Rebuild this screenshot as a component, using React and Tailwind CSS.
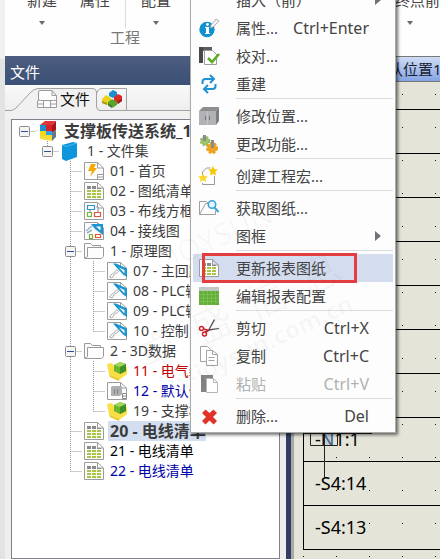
import clsx from "clsx";

const TREE = [
  { icon: "root", label: "支撑板传送系统_1", guides: ["box"], bold: true },
  { icon: "book", label: "1 - 文件集", guides: ["", "boxTop"] },
  { icon: "bolt", label: "01 - 首页", guides: ["", "", "tee"] },
  { icon: "list", label: "02 - 图纸清单", guides: ["", "", "tee"] },
  { icon: "blocks", label: "03 - 布线方框图", guides: ["", "", "tee"] },
  { icon: "wiring", label: "04 - 接线图", guides: ["", "", "tee"] },
  { icon: "folder", label: "1 - 原理图", guides: ["", "", "boxTee"] },
  { icon: "scheme", label: "07 - 主回路", guides: ["", "", "line", "tee"] },
  { icon: "scheme", label: "08 - PLC输入", guides: ["", "", "line", "tee"] },
  { icon: "scheme", label: "09 - PLC输出", guides: ["", "", "line", "tee"] },
  { icon: "scheme", label: "10 - 控制", guides: ["", "", "line", "end"] },
  { icon: "folder", label: "2 - 3D数据", guides: ["", "", "boxTee"] },
  { icon: "part", label: "11 - 电气装配", guides: ["", "", "line", "tee"], color: "text-[#c00000]" },
  { icon: "cabinetPage", label: "12 - 默认位置", guides: ["", "", "line", "tee"], color: "text-[#0000a8]" },
  { icon: "part", label: "19 - 支撑板", guides: ["", "", "line", "end"] },
  { icon: "list", label: "20 - 电线清单", guides: ["", "", "tee"], bold: true, selected: true },
  { icon: "list", label: "21 - 电线清单", guides: ["", "", "tee"], color: "text-black" },
  { icon: "list", label: "22 - 电线清单", guides: ["", "", "end"], color: "text-[#0000a8]" },
];

const MENU = [
  [
    { label: "插入（前）", arrow: true },
    { icon: "info", label: "属性...", keys: "Ctrl+Enter" },
    { icon: "check", label: "校对..." },
    { icon: "refresh", label: "重建" },
  ],
  [
    { icon: "cabinet", label: "修改位置..." },
    { icon: "gears", label: "更改功能..." },
  ],
  [{ icon: "macro", label: "创建工程宏..." }],
  [
    { icon: "search", label: "获取图纸..." },
    { label: "图框", arrow: true },
  ],
  [
    { icon: "list", label: "更新报表图纸", active: true },
    { icon: "grid", label: "编辑报表配置" },
  ],
  [
    { icon: "cut", label: "剪切", keys: "Ctrl+X" },
    { icon: "copy", label: "复制", keys: "Ctrl+C" },
    { icon: "paste", label: "粘贴", keys: "Ctrl+V", disabled: true },
  ],
  [{ icon: "del", label: "删除...", keys: "Del" }],
];

const WIRES = ["", "", "", "", "", "", "", "", "-N1:1", "-S4:14", "-S4:13"];

const page = <path d="M.500 1.500h13l6 5.500v11.500h-19zM13.500 1.500v5.500h6" fill="#fdfdfd" stroke="#9c9c9c" />;

const ICONS = {
  root: (
    <>
      <path d="M2 4l5-4h11l-4 4z" fill="#e0343a" />
      <path d="M14 4l4-4v9l-4 3z" fill="#a8161c" />
      <path d="M2 4h6v6H2z" fill="#1c8fd0" />
      <path d="M8 4h6v6H8z" fill="#d8232a" />
      <path d="M2 10h6v5H2z" fill="#f4d51f" />
      <path d="M8 10h6v4H8z" fill="#2f9fe0" />
      <path d="M2 15h6v4l-6-1zM8 14h6v6l-6-1z" fill="#f6dc3a" />
      <path d="M14 12l4-3v7l-4 4z" fill="#5f7c86" />
    </>
  ),
  book: (
    <>
      <path d="M1 4l11-3 4 1v14l-11 4-4-2z" fill="#0d96dc" />
      <path d="M1 4l4 1.500L16 2" fill="none" stroke="#59bdf0" strokeWidth=".8" />
    </>
  ),
  bolt: (
    <>
      {page}
      <path d="M7 3h5l-2 4h3l-7 9 2-6H4z" fill="#f2a900" />
      <path d="M13.500 13.500h6v5h-6zM13.500 16h6" fill="#fff" stroke="#999" />
    </>
  ),
  list: (
    <>
      {page}
      <path d="M3 5h4v3H3zM8 5h4v3H8zM13 7h4v1h-4z" fill="#8a8a8a" />
      <path d="M3 9h4v2H3zM8 9h4v2H8zM13 9h4v2h-4zM3 12h4v2H3zM8 12h4v2H8zM13 12h4v2h-4zM3 15h4v2H3zM8 15h4v2H8zM13 15h4v2h-4z" fill="#a9c545" />
    </>
  ),
  blocks: (
    <>
      {page}
      <g fill="#fff" strokeWidth="1.200">
        <path d="M6 8v4M12 6h2v5" stroke="#999" />
        <path d="M3.500 4.500h7v4h-7z" stroke="#2a91cf" />
        <path d="M3.500 11.500h4v4h-4z" stroke="#79b530" />
        <path d="M10.500 11.500h6v4h-6z" stroke="#e0553a" />
      </g>
    </>
  ),
  wiring: (
    <>
      {page}
      <path d="M7 3h12v11l-4-3-4-3z" fill="#1c93d2" />
      <path d="M12 5.500h4.500v4z" fill="#fff" />
      <path d="M2 10l6-5M3 12l5-3" stroke="#8fb3c6" strokeWidth="1.500" />
      <g fill="#fff" strokeWidth="1.200">
        <path d="M5.500 13.500h3v4h-3z" stroke="#79b530" />
        <path d="M11.500 13.500h5v3h-5z" stroke="#e0553a" />
      </g>
    </>
  ),
  scheme: (
    <>
      {page}
      <path d="M6 2.500h3l11 5V16l-4-2.500z" fill="#1b93cf" />
      <path d="M12 6.500l5.500 2.500v3.500z" fill="#f1f9fd" />
      <path d="M2.500 16l3-3.500 2 1-2.500 3.500zM7 11.500l3-3 1.500 2-2.500 2z" fill="#fff" stroke="#a3a3a3" strokeWidth=".9" />
    </>
  ),
  folder: (
    <>
      <path d="M.500 17V2.500h6l2 2h8v2" fill="#fafafa" stroke="#9a9a9a" />
      <path d="M.500 17.500l3-2v-9h16v9l-2 2z" fill="#fdfdfd" stroke="#9a9a9a" />
    </>
  ),
  part: (
    <>
      <path d="M0 3l5-1 4 6 11-2v7l-8 6L2 14z" fill="#f9de45" />
      <path d="M2 14l10 4v2L3 16z" fill="#e8c42c" />
      <path d="M7 4l6-3 6 2v7l-6 3-6-3z" fill="#69b52e" />
      <path d="M7 4l6-3 6 2-6 3z" fill="#a4d65e" />
      <path d="M13 6l6-3v7l-6 3z" fill="#3f8f25" />
    </>
  ),
  cabinetPage: (
    <>
      {page}
      <path d="M4 6l2-1h9v8l-2 2H4z" fill="#adb0b3" />
      <path d="M7.500 8v5M10.500 8v5" stroke="#858585" />
      <path d="M15.500 12.500h4v5h-4zM15.500 15h4" fill="#fff" stroke="#888" />
    </>
  ),
  info: (
    <>
      <circle cx="8" cy="11.500" r="7.700" fill="#1091d2" />
      <path d="M6 9h4v6h1v1H6v-1h1v-5H6z" fill="#fff" />
      <circle cx="8.500" cy="6.500" r="1.400" fill="#fff" />
      <path d="M12 7l5-6 3 2-6 6-3 1z" fill="#f5f5f5" stroke="#9a9a9a" strokeWidth=".8" />
    </>
  ),
  check: (
    <>
      <path d="M0 1h4v16H0z" fill="#484848" />
      <path d="M4 1h9v4H4z" fill="#5d5d5d" />
      <path d="M5.500 4.500h8l4 4v10h-12z" fill="#fff" stroke="#9c9c9c" />
      <path d="M9 12l4 4 7-8" fill="none" stroke="#5eac24" strokeWidth="2.600" />
    </>
  ),
  refresh: (
    <g fill="none" stroke="#1c93d2" strokeWidth="2">
      <path d="M3.500 10V8q0-3 3-3h8M11 1l4 4-4 4" />
      <path d="M16.500 10v2q0 3-3 3h-8M9 11l-4 4 4 4" />
    </g>
  ),
  cabinet: (
    <>
      <path d="M0 5l4-4h16l-3 4z" fill="#8b8d90" />
      <path d="M0 5h17v14H0z" fill="#b0b2b5" />
      <path d="M17 5l3-4v14l-3 4z" fill="#7b7d81" />
      <path d="M6.500 10v4M10.500 10v4" stroke="#777" />
      <path d="M8.500 5v14" stroke="#c3c5c7" />
    </>
  ),
  gears: (
    <>
      <circle cx="6" cy="7" r="4.300" fill="#9cc46a" stroke="#8fbe60" strokeWidth="2" strokeDasharray="2 1.500" />
      <circle cx="13" cy="14" r="4.800" fill="#f1a51e" stroke="#eb9d1c" strokeWidth="2.400" strokeDasharray="2.500 1.500" />
      <path d="M4 1h3v6H4zM12 6h3v8h-3z" fill="#8b8b8b" />
    </>
  ),
  macro: (
    <>
      <path d="M3.500 11V6l4-4h4M15.500 10v8.500h-12V17" fill="none" stroke="#9a9a9a" />
      <path d="M14 0l1.500 3.200 3.500.3-2.700 2.300L17 9.500l-3-1.800-3 1.800.7-3.700L9 3.500l3.500-.3z" fill="#f7c600" />
      <path d="M4 7l1.300 3L9 10.500l-2.500 2.200L7 16l-3-1.700L1 16l.5-3.300L-1 10.500 2.700 10z" fill="#fbd72a" />
    </>
  ),
  search: (
    <>
      <path d="M.500 16V3.500h7l2 2h5M.500 16.500l6-11h3M.500 16.500h16v-4" fill="none" stroke="#a0a0a0" />
      <circle cx="13" cy="6.500" r="3.700" fill="#e9f6fd" stroke="#3da0d8" strokeWidth="1.600" />
      <path d="M15.500 9.500l4 4.500" stroke="#3da0d8" strokeWidth="2" />
    </>
  ),
  grid: (
    <>
      <path d="M0 1h20v4H0z" fill="#c4c8c4" />
      <path d="M0 5h20v14H0z" fill="#62b038" />
      <path d="M4.500 5v14M8.500 5v14M12.500 5v14M16.500 5v14M0 8.500h20M0 12h20M0 15.500h20" stroke="#82c35d" strokeWidth=".7" />
    </>
  ),
  cut: (
    <>
      <path d="M5 13l4-1L15 1l1 1-5 9 9-1v1l-9 1.500-4 2z" fill="#555" />
      <circle cx="2.500" cy="10.500" r="2" fill="none" stroke="#d0222a" strokeWidth="1.500" />
      <circle cx="5.500" cy="16" r="2" fill="none" stroke="#d0222a" strokeWidth="1.500" />
      <path d="M4.500 11l5 1-3 2.500" fill="none" stroke="#d0222a" strokeWidth="1.300" />
    </>
  ),
  copy: (
    <g fill="#fff" stroke="#a3a3a3">
      <path d="M1.500.500h7l3 3v12h-10z" />
      <path d="M7.500 4.500h6l5 4v11h-11zM13.500 4.500v4h5M9.500 11.500h6M9.500 14.500h6" />
    </g>
  ),
  paste: (
    <>
      <path d="M2 1h12v4H7v13H2z" fill="#858585" />
      <path d="M7.500 4.500h7l4 4v10h-11z" fill="#fff" stroke="#b5b5b5" />
      <path d="M14.500 4.500v4h4" fill="none" stroke="#b5b5b5" />
    </>
  ),
  del: (
    <path d="M3 7l3.500-3.500L10.500 7l4-3.500L18 7l-4 4 4 4-3.500 3.500-4-4-4 4L3 15l4-4z" fill="#df3427" />
  ),
};

function Icon({ name }) {
  return (
    <svg viewBox="0 0 20 20" className="h-5 w-5 shrink-0 overflow-visible" aria-hidden="true">
      {ICONS[name]}
    </svg>
  );
}

// One 23px wide cell of the dotted tree lines, with an optional collapse box.
function Guide({ kind }) {
  const box = kind.startsWith("box");
  const lines = {
    line: "M11.500 0V20",
    tee: "M11.500 0V20M11.500 10.500H23",
    end: "M11.500 0V10.500M11.500 10.500H23",
    box: "M11.500 10.500H23",
    boxTop: "M11.500 0V10.500M11.500 10.500H23",
    boxTee: "M11.500 0V20M11.500 10.500H23",
  };
  return (
    <svg viewBox="0 0 23 20" className="h-5 w-[23px] shrink-0" aria-hidden="true">
      <path d={lines[kind] || ""} stroke="#999" strokeDasharray="1 1" fill="none" />
      {box && (
        <>
          <rect x="6.500" y="5.500" width="10" height="10" rx="1" fill="#f4f4f4" stroke="#8d8d8d" />
          <path d="M8 10.500h7" stroke="#2f4f9a" />
        </>
      )}
    </svg>
  );
}

function Caret() {
  return (
    <svg viewBox="0 0 6 4" className="h-1 w-1.5" aria-hidden="true">
      <path d="M0 0h6L3 4z" fill="#6b6b6b" />
    </svg>
  );
}

function RibbonButton({ label, caret }) {
  return (
    <button type="button" className="flex h-9 flex-col items-center gap-[11px] whitespace-nowrap leading-5">
      {label}
      {caret && <Caret />}
    </button>
  );
}

function Ribbon() {
  return (
    <header className="flex h-14 shrink-0 justify-between overflow-hidden bg-[#fefefe] text-[15px] text-[#444]">
      <div className="-mt-[10px] w-60">
        <div className="flex pl-[22px]">
          <RibbonButton label="新建" caret />
          <div className="w-[23px]" />
          <RibbonButton label="属性" />
          <div className="mx-[15px] h-[38px] w-px bg-[#dcdcdc]" />
          <RibbonButton label="配置" caret />
        </div>
        <div className="text-center leading-[18px] text-[#777]">工程</div>
      </div>
      <div className="-mt-[10px]">
        <RibbonButton label="线终点前" caret />
      </div>
    </header>
  );
}

function FilePanel() {
  return (
    <section className="flex w-[281px] shrink-0 flex-col bg-[#eeeeef]">
      <h2 className="h-[29px] bg-linear-to-b from-[#4c5d80] to-[#3b5075] pl-[5px] text-[15px] leading-8 text-white">
        文件
      </h2>
      <div className="relative flex h-[34px] shrink-0 bg-linear-to-b from-[#f9f9f9] to-[#eaeaea] pt-[3px] text-[15px] text-[#111]">
        <svg className="absolute inset-0 h-full w-full" aria-hidden="true">
          <path d="M0 25.500H6Q9 25 11 23L25 8Q29 3.500 33 3.500H88Q91 3.500 91.500 7V22Q92 25.500 95 25.500H281V34H0z" fill="#f1f1f1" />
          <path d="M0 25.500H6Q9 25 11 23L25 8Q29 3.500 33 3.500H88Q91 3.500 91.500 7V22Q92 25.500 95 25.500H281M92 8Q93 3.500 97 3.500H121.500V25" fill="none" stroke="#a2a2a2" />
        </svg>
        <button type="button" className="relative flex h-[22px] items-center gap-[3px] pl-8">
          <svg viewBox="0 0 20 20" className="h-5 w-5" aria-hidden="true">
            <path d="M1.500 12V3q0-1.500 1.500-1.500h12l4.500 5V12M15 1.500v5h4.500M.500 12q1.500-1.500 3-.5h13q1.500-1 3 .5v6.500h-19zM6.500 11.500v7M13.500 11.500v7M.500 15h6M13.500 15h6" fill="#fdfdfd" stroke="#9b9b9b" />
          </svg>
          文件
        </button>
        <button type="button" aria-label="设备" className="relative ml-3 flex h-[22px] items-center">
          <svg viewBox="0 0 20 20" className="h-5 w-5" aria-hidden="true">
            <path d="M7 4l4-3 4 2v4l-4 2-4-2z" fill="#1b8fd0" />
            <path d="M12 8l4-3 4 2v5l-4 3-4-3z" fill="#d92b24" />
            <path d="M0 10l4-4 5 3v4l-4 3-5-2z" fill="#ecd01e" />
            <path d="M6 13l4-3 5 3v3l-5 3-4-3z" fill="#55a82a" />
            <path d="M0 12l5 2v2l-5-2zM6 14l4 3v2l-4-2zM16 12l4-2v2l-4 3z" fill="#000" opacity=".3" />
          </svg>
        </button>
      </div>
      <ul className="mx-[6px] flex-1 border border-[#7d828b] bg-white pl-px pt-px text-[14px] text-[#3c3c3c]">
        {TREE.map((row) => (
          <li key={row.label} className="flex h-5 items-center whitespace-nowrap leading-5">
            {row.guides.map((kind, i) => (
              <Guide key={i} kind={kind} />
            ))}
            <span className="flex w-[23px] shrink-0 justify-center">
              <Icon name={row.icon} />
            </span>
            <span
              className={clsx(
                "ml-[3px] h-5 pl-0.5",
                row.bold && "text-base/5 font-bold",
                row.selected && "bg-[#d3dff0]",
                row.color
              )}
            >
              {row.label}
            </span>
          </li>
        ))}
      </ul>
    </section>
  );
}

function Drawing() {
  return (
    <main className="flex min-w-0 flex-1 flex-col">
      <div className="flex h-[26px] shrink-0 items-center whitespace-nowrap border-y border-[#777] bg-linear-to-b from-[#d0dcf6] to-[#86a4e4] pl-[82px] text-[15px] text-[#16202e]">
        默认位置1
      </div>
      <div className="relative flex-1 overflow-hidden border-l-3 border-[#a6aaa6] bg-[#e4e4d9] pl-[9px]">
        <svg className="absolute inset-0 h-full w-full" aria-hidden="true">
          <defs>
            <pattern id="dots" width="33" height="33" patternUnits="userSpaceOnUse">
              <rect x="9" y="12" width="1" height="1" fill="#111" />
            </pattern>
          </defs>
          <rect width="100%" height="100%" fill="url(#dots)" />
        </svg>
        <table className="relative w-full border-collapse border-l border-black text-[18px] text-black">
          <tbody>
            {WIRES.map((wire, i) => (
              <tr key={i} className={clsx("border-b border-black", i === 0 ? "h-[27px]" : "h-11")}>
                <td className="relative py-0 pl-[11px] leading-6">
                  {wire}
                  {wire === "-N1:1" && (
                    <svg className="absolute left-0 top-0 h-[62px] w-20" aria-hidden="true">
                      <path d="M20 15h9v12h-9z" fill="#8ebcf0" opacity=".5" />
                      <path d="M0 15.500h68M6.500 15v12.500h27V15M20.500 15v45" fill="none" stroke="#222" />
                    </svg>
                  )}
                </td>
              </tr>
            ))}
          </tbody>
        </table>
      </div>
    </main>
  );
}

function MenuItem({ item }) {
  return (
    <li className="relative">
      <button
        type="button"
        role="menuitem"
        disabled={item.disabled}
        className={clsx(
          "flex h-7 w-full items-center whitespace-nowrap pl-[6px] pr-6 text-left leading-7",
          item.active && "bg-[#d3ddef]",
          item.disabled ? "text-[#b0b0b0]" : "text-[#444]"
        )}
      >
        <span className="mr-[17px] w-5 shrink-0">{item.icon && <Icon name={item.icon} />}</span>
        <span className="flex-1">{item.label}</span>
        {item.keys && <span className="text-base/7">{item.keys}</span>}
        {item.arrow && (
          <svg viewBox="0 0 6 10" className="-mr-3 h-2.5 w-1.5" aria-hidden="true">
            <path d="M0 0l6 5-6 5z" fill="#6f7378" />
          </svg>
        )}
      </button>
      {item.active && (
        <span className="pointer-events-none absolute -bottom-px -top-px left-[9px] w-[155px] border-3 border-[#e33d3f]" />
      )}
    </li>
  );
}

function ContextMenu() {
  return (
    <nav
      role="menu"
      className="absolute -top-[17px] left-[190px] w-[206px] border border-[#aaa] bg-[#fdfdfd] px-0.5 py-0.5 text-[15px] shadow-[2px_2px_3px_rgba(0,0,0,0.55)]"
    >
      {MENU.map((group, i) => (
        <ul key={i}>
          {i > 0 && <li role="separator" className="mb-[3px] ml-[43px] h-px bg-[#dadce0]" />}
          {group.map((item) => (
            <MenuItem key={item.label} item={item} />
          ))}
        </ul>
      ))}
    </nav>
  );
}

function Watermark() {
  return (
    <div
      aria-hidden="true"
      className="pointer-events-none absolute left-[120px] top-[216px] w-[220px] -rotate-25 whitespace-nowrap text-center text-black/3"
    >
      <div className="mb-8 pl-8 text-[30px] leading-10">JOYSUN</div>
      <div className="flex justify-between text-[42px] leading-12">
        <span>卓</span>
        <span>盛</span>
        <span>信</span>
        <span>息</span>
      </div>
      <div className="text-[24px] font-bold leading-8">sw-joysun.com.cn</div>
    </div>
  );
}

export default function App() {
  return (
    <div className="relative flex min-h-screen overflow-hidden bg-white font-['Noto_Sans','Noto_Sans_CJK_SC',sans-serif]">
      <div className="w-[5px] shrink-0 border-t-[59px] border-[#f1f1f1] bg-[#e3e3e3]" />
      <div className="flex min-w-0 flex-1 flex-col">
        <Ribbon />
        <div className="flex flex-1">
          <FilePanel />
          <div className="w-[5px] shrink-0 bg-[#2f3f62]" />
          <Drawing />
        </div>
      </div>
      <ContextMenu />
      <Watermark />
    </div>
  );
}
